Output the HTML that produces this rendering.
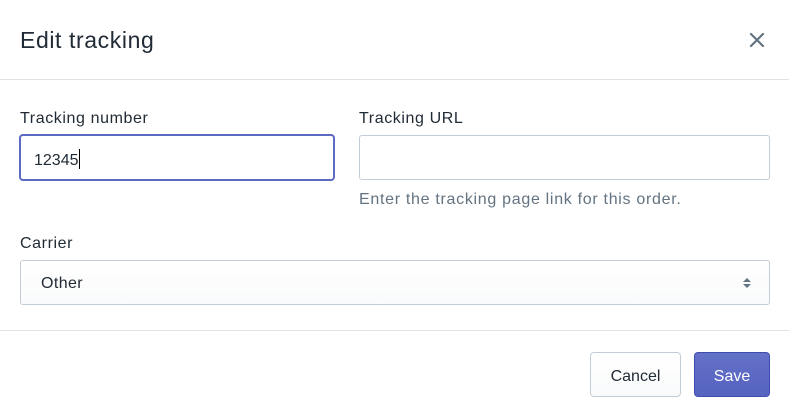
<!DOCTYPE html>
<html><head><style>
*{box-sizing:border-box;margin:0;padding:0}
body{width:789px;height:410px;background:#fff;font-family:"Liberation Sans",sans-serif;color:#212b36;position:relative;overflow:hidden}
.abs{position:absolute}
.t{font-size:23px;left:20px;top:27px;letter-spacing:0.6px}
.hr{left:0;width:789px;height:1px;background:#dfe3e8}
.lbl{font-size:16px;letter-spacing:0.6px}
.inp{border:1px solid #c4cdd5;border-radius:3px;background:#fff}
.btn{border-radius:4px;font-size:16px;text-align:center;line-height:44px}
</style></head><body>
<div class="abs t">Edit tracking</div>
<svg class="abs" style="left:748px;top:31px" width="18" height="18" viewBox="0 0 18 18"><path d="M3 3L15 15M15 3L3 15" stroke="#637381" stroke-width="2.2" stroke-linecap="round"/></svg>
<div class="abs hr" style="top:79px"></div>
<div class="abs lbl" style="left:20px;top:110px">Tracking number</div>
<div class="abs inp" style="left:19px;top:134px;width:316px;height:47px;border:2px solid #5c6ac4;border-radius:4px"></div>
<div class="abs" style="left:34px;top:149px;font-size:16px">12345<span style="display:inline-block;width:1px;height:20px;background:#000;vertical-align:-4px"></span></div>
<div class="abs lbl" style="left:359px;top:110px">Tracking URL</div>
<div class="abs inp" style="left:359px;top:135px;width:411px;height:45px"></div>
<div class="abs" style="left:359px;top:191px;font-size:16px;letter-spacing:0.7px;color:#637381">Enter the tracking page link for this order.</div>
<div class="abs lbl" style="left:20px;top:235px">Carrier</div>
<div class="abs inp" style="left:20px;top:260px;width:750px;height:45px;background:linear-gradient(#fff,#f9fafb)"></div>
<div class="abs" style="left:41px;top:275px;font-size:16px;letter-spacing:0.4px">Other</div>
<svg class="abs" style="left:742px;top:276px" width="10" height="14" viewBox="0 0 10 14"><path d="M1 6L5 2L9 6ZM1 8L5 12L9 8Z" fill="#637381"/></svg>
<div class="abs hr" style="top:330px"></div>
<div class="abs btn" style="left:590px;top:352px;width:91px;height:45px;border:1px solid #c4cdd5;background:linear-gradient(#fff,#f9fafb);padding-top:2px">Cancel</div>
<div class="abs btn" style="left:694px;top:352px;width:76px;height:45px;background:linear-gradient(#6371c7,#5563c1);border:1px solid #3f4eae;color:#fff;padding-top:2px">Save</div>
</body></html>
